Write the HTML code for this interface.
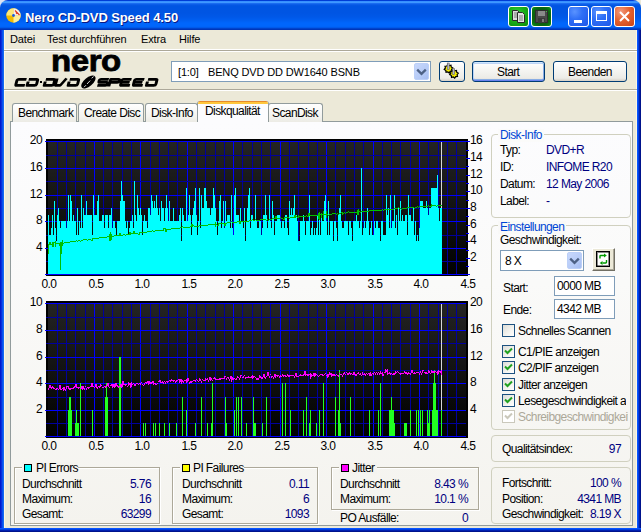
<!DOCTYPE html>
<html><head><meta charset="utf-8">
<style>
*{box-sizing:border-box}
html,body{margin:0;padding:0}
body{width:641px;height:532px;overflow:hidden;position:relative;background:#ECE9D8;font-family:"Liberation Sans",sans-serif;font-size:11px;color:#000}
.abs{position:absolute}
.t{position:absolute;white-space:nowrap;line-height:13px;font-size:12px;letter-spacing:-0.6px}
.m{font-size:11px;letter-spacing:-0.15px}
.nv{color:#000080}
.title{left:0;top:0;width:641px;height:30px;border-radius:8px 8px 0 0;
 background:linear-gradient(#003DD6 0px,#003DD6 1px,#2E87FF 1px,#3F98FF 2px,#3F98FF 3px,#2476F6 3px,#0F62EC 4px,#0758E4 5px,#0055E2 6px,#0055E3 13px,#0058E8 17px,#005EF0 20px,#0066FC 23px,#0066FC 26px,#0062F6 27px,#0052E0 28px,#0035B8 29px,#0035B8 30px)}
.lb{left:0;top:30px;width:4px;height:502px;background:linear-gradient(90deg,#0019CF 0,#0019CF 1px,#0831D9 1px,#0831D9 2px,#0850F0 2px,#0850F0 3px,#166AEE 3px)}
.rb{left:637px;top:30px;width:4px;height:502px;background:linear-gradient(90deg,#0855FF 0,#0855FF 1px,#0040E0 1px,#0040E0 2px,#0020B0 2px,#0020B0 3px,#00138C 3px)}
.bb{left:0;top:528px;width:641px;height:4px;background:linear-gradient(#0855FF 0,#0855FF 1px,#0040E0 1px,#0040E0 2px,#0020B0 2px,#0020B0 3px,#00138C 3px)}
.ttext{left:25px;top:7px;color:#fff;font-weight:bold;font-size:13px;line-height:21px;letter-spacing:-0.1px;text-shadow:1px 1px 0 #0A1883;white-space:nowrap}
.tbtn{top:6px;width:21px;height:21px;border:1px solid #fff;border-radius:3px}
.bl{background:radial-gradient(circle at 30% 25%,#5A93FF 0,#2F6FF6 40%,#1D56E8 100%)}
.gr{background:radial-gradient(circle at 40% 35%,#3CD23C 0,#1BB01B 45%,#0A8A0A 100%)}
.sep{left:4px;width:633px;height:1px}
.combo{background:#fff;border:1px solid #7F9DB9}
.ddb{border-radius:2px;background:linear-gradient(135deg,#C8D8FC 0,#B6CBF7 60%,#A6BDF2 100%);border:1px solid #BCD0F8}
.btn{border:1px solid #003C74;border-radius:3px;background:linear-gradient(#FFFFFF 0,#F6F6F3 40%,#ECEBE6 85%,#D6D0C5 100%)}
.tab{top:103px;height:19px;border:1px solid #919B9C;border-bottom:none;border-radius:3px 3px 0 0;background:linear-gradient(#FFFFFF,#F3F3EF 70%,#ECEBE5)}
.panel{left:10px;top:121px;width:623px;height:405px;border:1px solid #919B9C;background:linear-gradient(#FCFCFE 0,#FAFAF9 40%,#F4F3EE 100%)}
.gb{border:1px solid #D0D0BF;border-radius:4px}
.eb{border:1px solid #ACA899;box-shadow:1px 1px 0 #fff, inset 1px 1px 0 #fff}
.chk{width:13px;height:13px;border:1px solid #1C5180;background:linear-gradient(135deg,#DCDCD7 0,#F4F4F0 60%,#FFFFFF 100%)}
.chk.dis{border-color:#CAC8BB;background:#fff}
.sq{width:8px;height:8px;border:1px solid #000}
</style></head><body>
<!-- client background -->
<div class="abs" style="left:4px;top:30px;width:633px;height:498px;background:#ECE9D8"></div>
<div class="abs" style="left:4px;top:30px;width:1px;height:498px;background:#FCF6E2"></div>
<div class="abs" style="left:636px;top:30px;width:1px;height:498px;background:#FCF6E2"></div>
<!-- title bar -->
<div class="abs" style="left:0;top:0;width:8px;height:8px;background:#DCE2F2"></div>
<div class="abs title"></div>
<div class="abs lb"></div><div class="abs rb"></div><div class="abs bb"></div>
<!-- icon -->
<svg class="abs" style="left:6px;top:8px" width="15" height="15" viewBox="0 0 15 15">
 <circle cx="7.5" cy="7.5" r="7.2" fill="#F2BC00"/>
 <path d="M7.5 7.5 L0.3 7.5 A7.2 7.2 0 0 1 7.5 0.3 Z" fill="#FBE77A"/>
 <path d="M7.5 7.5 L14.7 7.5 A7.2 7.2 0 0 1 7.5 14.7 Z" fill="#FCEE9A"/>
 <path d="M7.5 7.5 L7.5 0.3 A7.2 7.2 0 0 1 14.7 7.5 Z" fill="#F4F0EE"/>
 <path d="M9 2.5 L13.5 7 M10 4.5 L11 6" stroke="#E03A1A" stroke-width="1.2"/>
 <circle cx="7.5" cy="7.5" r="1.4" fill="#1D5CE0"/>
</svg>
<div class="abs ttext">Nero CD-DVD Speed 4.50</div>
<!-- title buttons -->
<div class="abs tbtn gr" style="left:508px"></div>
<svg class="abs" style="left:512px;top:10px" width="14" height="14" viewBox="0 0 14 14">
 <path d="M0.5 0.5 H5.5 L7 2 V10.5 H0.5 Z" fill="#DCDCDC" stroke="#2A2A2A"/>
 <path d="M5.5 2.5 H10.5 L12.5 4.5 V12.5 H5.5 Z" fill="#E4E4E4" stroke="#2A2A2A"/>
 <path d="M2 3h3M2 5h3M2 7h3M7 6h4M7 8h4M7 10h4" stroke="#7A7A7A" stroke-width="1"/>
</svg>
<div class="abs tbtn gr" style="left:531px;background:radial-gradient(circle at 50% 50%,#0A3A0A 0,#0B6A10 70%,#10A015 100%)"></div>
<svg class="abs" style="left:535px;top:10px" width="13" height="13" viewBox="0 0 13 13">
 <rect x="0" y="0" width="13" height="13" fill="#2E2E2E"/>
 <rect x="1" y="1" width="11" height="11" fill="#4A4A4A"/>
 <rect x="3" y="1" width="7" height="5" fill="#8A8A8A"/>
 <rect x="3" y="8" width="7" height="5" fill="#3A3A3A"/>
 <rect x="7" y="9" width="2" height="3" fill="#7A7A7A"/>
 <rect x="11" y="1" width="1" height="1" fill="#40C040"/>
</svg>
<div class="abs tbtn bl" style="left:568px"></div>
<div class="abs" style="left:574px;top:20px;width:8px;height:3px;background:#fff"></div>
<div class="abs tbtn bl" style="left:591px"></div>
<div class="abs" style="left:596px;top:11px;width:11px;height:10px;border:1px solid #fff;border-top-width:3px"></div>
<div class="abs tbtn" style="left:614px;background:radial-gradient(circle at 30% 25%,#F39A7E 0,#E5622F 45%,#C94214 100%)"></div>
<svg class="abs" style="left:614px;top:6px" width="21" height="21" viewBox="0 0 21 21">
 <path d="M6 6 L15 15 M15 6 L6 15" stroke="#fff" stroke-width="2"/>
</svg>

<!-- menu -->
<div class="t m" style="left:10px;top:33px">Datei</div>
<div class="t m" style="left:47px;top:33px">Test durchführen</div>
<div class="t m" style="left:141px;top:33px">Extra</div>
<div class="t m" style="left:179px;top:33px">Hilfe</div>
<div class="abs sep" style="top:49px;background:#fff"></div>
<div class="abs sep" style="top:50px;background:#ACA899"></div>
<div class="abs sep" style="top:51px;background:#fff"></div>
<div class="abs sep" style="top:89px;background:#ACA899"></div>
<div class="abs sep" style="top:90px;background:#fff"></div>

<!-- logo -->
<div class="abs" style="left:51px;top:43px;font-weight:bold;font-size:30px;line-height:36px;letter-spacing:-0.4px;white-space:nowrap;-webkit-text-stroke:0.8px #000;transform-origin:0 0;transform:scaleX(1.1)">nero</div>
<svg class="abs" style="left:0;top:0" width="170" height="92"><g fill="none" stroke="#000" stroke-width="2.7" stroke-linejoin="round"><path transform="translate(16.4 78.4) skewX(-15) scale(1.1 1)" d="M9.4 1 H2.2 Q1 1 1 2.2 V5.8 Q1 7 2.2 7 H9.4"/><path transform="translate(27.9 78.4) skewX(-15) scale(1.1 1)" d="M1 1 H8 Q9.3 1 9.3 2.2 V5.8 Q9.3 7 8 7 H1 V3"/><path transform="translate(45.0 78.4) skewX(-15) scale(1.1 1)" d="M1 1 H8 Q9.3 1 9.3 2.2 V5.8 Q9.3 7 8 7 H1 V3"/><path transform="translate(56.0 78.4) skewX(-15) scale(1.1 1)" d="M1 0 V5.8 Q1 7 2.2 7 H5.6 L9.6 0"/><path transform="translate(68.9 78.4) skewX(-15) scale(1.1 1)" d="M1 1 H8 Q9.3 1 9.3 2.2 V5.8 Q9.3 7 8 7 H1 V3"/><path transform="translate(98.7 78.4) skewX(-15) scale(1.1 1)" d="M9.4 1 H2.2 Q1 1 1 2.2 V2.8 Q1 4 2.2 4 H8 Q9.3 4 9.3 5.2 V5.8 Q9.3 7 8 7 H0.5"/><path transform="translate(109.8 78.4) skewX(-15) scale(1.1 1)" d="M1 8 V1 H8 Q9.3 1 9.3 2.2 V2.8 Q9.3 4 8 4 H1.6"/><path transform="translate(121.2 78.4) skewX(-15) scale(1.1 1)" d="M9.6 1 H2.2 Q1 1 1 2.2 V5.8 Q1 7 2.2 7 H9.6 M1.5 4 H8.6"/><path transform="translate(134.0 78.4) skewX(-15) scale(1.1 1)" d="M9.6 1 H2.2 Q1 1 1 2.2 V5.8 Q1 7 2.2 7 H9.6 M1.5 4 H8.6"/><path transform="translate(147.2 78.4) skewX(-15) scale(1.1 1)" d="M1 1 H8 Q9.3 1 9.3 2.2 V5.8 Q9.3 7 8 7 H1 V3"/></g><rect x="40" y="81" width="2" height="2" fill="#000"/></svg>
<svg class="abs" style="left:80px;top:75px" width="17" height="14" viewBox="0 0 17 14">
 <ellipse cx="8.4" cy="7" rx="8.6" ry="4.3" transform="rotate(-40 8.4 7)" fill="#000"/>
 <path d="M4 12.2 L6 10.2 M7 9 L10.2 5.6 M11.6 3.2 L13.6 1.6" stroke="#fff" stroke-width="1" opacity="0.85"/>
</svg>


<!-- drive combo -->
<div class="abs combo" style="left:171px;top:61px;width:260px;height:21px"></div>
<div class="t m" style="left:178px;top:66px">[1:0]</div>
<div class="t m" style="left:208px;top:66px">BENQ DVD DD DW1640 BSNB</div>
<div class="abs ddb" style="left:414px;top:63px;width:15px;height:17px"></div>
<svg class="abs" style="left:414px;top:63px" width="15" height="17"><path d="M3.2 6.6 L7.5 10.8 L11.8 6.6" fill="none" stroke="#4D6185" stroke-width="2.3"/></svg>
<!-- buttons -->
<div class="abs btn" style="left:439px;top:61px;width:26px;height:21px"></div>
<svg class="abs" style="left:439px;top:61px" width="26" height="21" viewBox="0 0 26 21">
 <g stroke="#000" stroke-width="1.2" fill="#F5EE00">
 <path d="M9 3.2 L10.2 4.6 L12 4.2 L12.2 6 L13.8 7 L12.6 8.4 L13 10.2 L11.2 10.4 L10.2 12 L8.8 10.8 L7 11.2 L6.8 9.4 L5.2 8.4 L6.4 7 L6 5.2 L7.8 5 Z"/>
 <path d="M14.5 8.4 L15.7 9.8 L17.5 9.4 L17.7 11.2 L19.3 12.2 L18.1 13.6 L18.5 15.4 L16.7 15.6 L15.7 17.2 L14.3 16 L12.5 16.4 L12.3 14.6 L10.7 13.6 L11.9 12.2 L11.5 10.4 L13.3 10.2 Z"/>
 </g>
 <rect x="8.2" y="2" width="2" height="6.5" fill="#B8B8C8" stroke="#555" stroke-width="0.5"/>
 <rect x="13.7" y="7.5" width="2" height="6" fill="#B8B8C8" stroke="#555" stroke-width="0.5"/>
</svg>
<div class="abs btn" style="left:472px;top:61px;width:73px;height:21px;box-shadow:inset 0 1px 0 #CEE7FF,inset 0 -1px 0 #6982EE,inset 1px 0 0 #BCD4F6,inset -1px 0 0 #89ADE4,inset 0 2px 0 #BCD4F6,inset 0 -2px 0 #89ADE4"></div>
<div class="t" style="left:497px;top:66px">Start</div>
<div class="abs btn" style="left:553px;top:61px;width:74px;height:21px"></div>
<div class="t" style="left:568px;top:66px">Beenden</div>

<!-- tabs -->
<div class="abs panel"></div>
<div class="abs tab" style="left:12px;width:65px"></div>
<div class="t" style="left:18px;top:107px">Benchmark</div>
<div class="abs tab" style="left:78px;width:66px"></div>
<div class="t" style="left:84px;top:107px">Create Disc</div>
<div class="abs tab" style="left:145px;width:53px"></div>
<div class="t" style="left:151px;top:107px">Disk-Info</div>
<div class="abs tab" style="left:268px;width:55px"></div>
<div class="t" style="left:272px;top:107px">ScanDisk</div>
<div class="abs" style="left:197px;top:101px;width:72px;height:21px;background:#FCFCFE;border-left:1px solid #919B9C;border-right:1px solid #919B9C;border-radius:3px 3px 0 0;overflow:hidden">
 <div style="position:absolute;left:-1px;top:0;width:72px;height:1px;background:#E68B2C"></div>
 <div style="position:absolute;left:-1px;top:1px;width:72px;height:2px;background:#FFC73C"></div>
</div>
<div class="t" style="left:205px;top:105px">Diskqualität</div>

<svg class="abs" style="left:0;top:0" width="641" height="532" shape-rendering="crispEdges">
<defs><linearGradient id="bg" x1="0" y1="0" x2="0" y2="1"><stop offset="0" stop-color="#242424"/><stop offset="1" stop-color="#000"/></linearGradient></defs>
<rect x="46" y="139" width="422" height="137" fill="#000"/>
<rect x="48" y="141" width="418" height="134" fill="url(#bg)"/>
<rect x="57" y="141" width="1" height="134" fill="#00009c"/>
<rect x="66" y="141" width="1" height="134" fill="#00009c"/>
<rect x="75" y="141" width="1" height="134" fill="#00009c"/>
<rect x="85" y="141" width="1" height="134" fill="#00009c"/>
<rect x="94" y="141" width="1" height="134" fill="#0000ff"/>
<rect x="103" y="141" width="1" height="134" fill="#00009c"/>
<rect x="112" y="141" width="1" height="134" fill="#00009c"/>
<rect x="122" y="141" width="1" height="134" fill="#00009c"/>
<rect x="131" y="141" width="1" height="134" fill="#00009c"/>
<rect x="140" y="141" width="1" height="134" fill="#0000ff"/>
<rect x="150" y="141" width="1" height="134" fill="#00009c"/>
<rect x="159" y="141" width="1" height="134" fill="#00009c"/>
<rect x="168" y="141" width="1" height="134" fill="#00009c"/>
<rect x="177" y="141" width="1" height="134" fill="#00009c"/>
<rect x="187" y="141" width="1" height="134" fill="#0000ff"/>
<rect x="196" y="141" width="1" height="134" fill="#00009c"/>
<rect x="205" y="141" width="1" height="134" fill="#00009c"/>
<rect x="215" y="141" width="1" height="134" fill="#00009c"/>
<rect x="224" y="141" width="1" height="134" fill="#00009c"/>
<rect x="233" y="141" width="1" height="134" fill="#0000ff"/>
<rect x="242" y="141" width="1" height="134" fill="#00009c"/>
<rect x="252" y="141" width="1" height="134" fill="#00009c"/>
<rect x="261" y="141" width="1" height="134" fill="#00009c"/>
<rect x="270" y="141" width="1" height="134" fill="#00009c"/>
<rect x="280" y="141" width="1" height="134" fill="#0000ff"/>
<rect x="289" y="141" width="1" height="134" fill="#00009c"/>
<rect x="298" y="141" width="1" height="134" fill="#00009c"/>
<rect x="308" y="141" width="1" height="134" fill="#00009c"/>
<rect x="317" y="141" width="1" height="134" fill="#00009c"/>
<rect x="326" y="141" width="1" height="134" fill="#0000ff"/>
<rect x="335" y="141" width="1" height="134" fill="#00009c"/>
<rect x="345" y="141" width="1" height="134" fill="#00009c"/>
<rect x="354" y="141" width="1" height="134" fill="#00009c"/>
<rect x="363" y="141" width="1" height="134" fill="#00009c"/>
<rect x="373" y="141" width="1" height="134" fill="#0000ff"/>
<rect x="382" y="141" width="1" height="134" fill="#00009c"/>
<rect x="391" y="141" width="1" height="134" fill="#00009c"/>
<rect x="400" y="141" width="1" height="134" fill="#00009c"/>
<rect x="410" y="141" width="1" height="134" fill="#00009c"/>
<rect x="419" y="141" width="1" height="134" fill="#0000ff"/>
<rect x="428" y="141" width="1" height="134" fill="#00009c"/>
<rect x="438" y="141" width="1" height="134" fill="#00009c"/>
<rect x="447" y="141" width="1" height="134" fill="#00009c"/>
<rect x="456" y="141" width="1" height="134" fill="#00009c"/>
<rect x="45" y="274" width="421" height="1" fill="#0000ff"/>
<rect x="46" y="261" width="420" height="1" fill="#00009c"/>
<rect x="45" y="248" width="421" height="1" fill="#0000ff"/>
<rect x="46" y="235" width="420" height="1" fill="#00009c"/>
<rect x="45" y="221" width="421" height="1" fill="#0000ff"/>
<rect x="46" y="208" width="420" height="1" fill="#00009c"/>
<rect x="45" y="195" width="421" height="1" fill="#0000ff"/>
<rect x="46" y="181" width="420" height="1" fill="#00009c"/>
<rect x="45" y="168" width="421" height="1" fill="#0000ff"/>
<rect x="46" y="155" width="420" height="1" fill="#00009c"/>
<rect x="45" y="141" width="421" height="1" fill="#0000ff"/>
<rect x="441" y="141" width="1" height="133" fill="#d8d8d8"/>
<path d="M48 215V274h1V215zM49 235V274h1V235zM50 235V274h1V235zM51 228V274h1V228zM52 215V274h1V215zM53 235V274h1V235zM54 201V274h1V201zM55 228V274h1V228zM56 241V274h1V241zM57 215V274h1V215zM58 208V274h1V208zM59 221V274h1V221zM60 228V274h1V228zM61 221V274h1V221zM62 221V274h1V221zM63 221V274h1V221zM64 221V274h1V221zM65 221V274h1V221zM66 228V274h1V228zM67 221V274h1V221zM68 195V274h1V195zM69 221V274h1V221zM70 195V274h1V195zM71 201V274h1V201zM72 221V274h1V221zM73 215V274h1V215zM74 221V274h1V221zM75 221V274h1V221zM76 235V274h1V235zM77 208V274h1V208zM78 235V274h1V235zM79 221V274h1V221zM80 228V274h1V228zM81 195V274h1V195zM82 228V274h1V228zM83 208V274h1V208zM84 215V274h1V215zM85 215V274h1V215zM86 201V274h1V201zM87 215V274h1V215zM88 215V274h1V215zM89 215V274h1V215zM90 215V274h1V215zM91 215V274h1V215zM92 235V274h1V235zM93 195V274h1V195zM94 215V274h1V215zM95 215V274h1V215zM96 215V274h1V215zM97 201V274h1V201zM98 195V274h1V195zM99 221V274h1V221zM100 221V274h1V221zM101 221V274h1V221zM102 215V274h1V215zM103 215V274h1V215zM104 228V274h1V228zM105 215V274h1V215zM106 215V274h1V215zM107 215V274h1V215zM108 228V274h1V228zM109 215V274h1V215zM110 215V274h1V215zM111 208V274h1V208zM112 228V274h1V228zM113 221V274h1V221zM114 221V274h1V221zM115 228V274h1V228zM116 235V274h1V235zM117 221V274h1V221zM118 221V274h1V221zM119 221V274h1V221zM120 201V274h1V201zM121 181V274h1V181zM122 195V274h1V195zM123 201V274h1V201zM124 201V274h1V201zM125 221V274h1V221zM126 228V274h1V228zM127 221V274h1V221zM128 235V274h1V235zM129 228V274h1V228zM130 221V274h1V221zM131 221V274h1V221zM132 215V274h1V215zM133 228V274h1V228zM134 181V274h1V181zM135 215V274h1V215zM136 221V274h1V221zM137 195V274h1V195zM138 208V274h1V208zM139 215V274h1V215zM140 208V274h1V208zM141 215V274h1V215zM142 235V274h1V235zM143 221V274h1V221zM144 215V274h1V215zM145 221V274h1V221zM146 221V274h1V221zM147 228V274h1V228zM148 208V274h1V208zM149 208V274h1V208zM150 215V274h1V215zM151 195V274h1V195zM152 201V274h1V201zM153 208V274h1V208zM154 201V274h1V201zM155 208V274h1V208zM156 195V274h1V195zM157 208V274h1V208zM158 215V274h1V215zM159 208V274h1V208zM160 221V274h1V221zM161 201V274h1V201zM162 208V274h1V208zM163 208V274h1V208zM164 221V274h1V221zM165 208V274h1V208zM166 195V274h1V195zM167 208V274h1V208zM168 221V274h1V221zM169 201V274h1V201zM170 221V274h1V221zM171 221V274h1V221zM172 221V274h1V221zM173 208V274h1V208zM174 221V274h1V221zM175 221V274h1V221zM176 221V274h1V221zM177 221V274h1V221zM178 221V274h1V221zM179 215V274h1V215zM180 208V274h1V208zM181 241V274h1V241zM182 208V274h1V208zM183 215V274h1V215zM184 221V274h1V221zM185 221V274h1V221zM186 188V274h1V188zM187 221V274h1V221zM188 215V274h1V215zM189 195V274h1V195zM190 215V274h1V215zM191 235V274h1V235zM192 215V274h1V215zM193 208V274h1V208zM194 201V274h1V201zM195 188V274h1V188zM196 215V274h1V215zM197 235V274h1V235zM198 221V274h1V221zM199 188V274h1V188zM200 228V274h1V228zM201 195V274h1V195zM202 208V274h1V208zM203 208V274h1V208zM204 188V274h1V188zM205 188V274h1V188zM206 201V274h1V201zM207 208V274h1V208zM208 208V274h1V208zM209 208V274h1V208zM210 215V274h1V215zM211 208V274h1V208zM212 208V274h1V208zM213 188V274h1V188zM214 195V274h1V195zM215 208V274h1V208zM216 221V274h1V221zM217 235V274h1V235zM218 221V274h1V221zM219 201V274h1V201zM220 195V274h1V195zM221 228V274h1V228zM222 221V274h1V221zM223 201V274h1V201zM224 228V274h1V228zM225 201V274h1V201zM226 221V274h1V221zM227 215V274h1V215zM228 215V274h1V215zM229 215V274h1V215zM230 228V274h1V228zM231 195V274h1V195zM232 228V274h1V228zM233 235V274h1V235zM234 195V274h1V195zM235 188V274h1V188zM236 215V274h1V215zM237 215V274h1V215zM238 215V274h1V215zM239 221V274h1V221zM240 208V274h1V208zM241 221V274h1V221zM242 221V274h1V221zM243 228V274h1V228zM244 208V274h1V208zM245 241V274h1V241zM246 221V274h1V221zM247 208V274h1V208zM248 195V274h1V195zM249 188V274h1V188zM250 228V274h1V228zM251 215V274h1V215zM252 215V274h1V215zM253 221V274h1V221zM254 221V274h1V221zM255 195V274h1V195zM256 221V274h1V221zM257 228V274h1V228zM258 228V274h1V228zM259 221V274h1V221zM260 221V274h1V221zM261 235V274h1V235zM262 228V274h1V228zM263 215V274h1V215zM264 215V274h1V215zM265 195V274h1V195zM266 215V274h1V215zM267 228V274h1V228zM268 221V274h1V221zM269 195V274h1V195zM270 221V274h1V221zM271 228V274h1V228zM272 201V274h1V201zM273 215V274h1V215zM274 235V274h1V235zM275 221V274h1V221zM276 221V274h1V221zM277 215V274h1V215zM278 215V274h1V215zM279 215V274h1V215zM280 221V274h1V221zM281 228V274h1V228zM282 221V274h1V221zM283 221V274h1V221zM284 228V274h1V228zM285 215V274h1V215zM286 215V274h1V215zM287 228V274h1V228zM288 235V274h1V235zM289 201V274h1V201zM290 215V274h1V215zM291 208V274h1V208zM292 215V274h1V215zM293 208V274h1V208zM294 195V274h1V195zM295 215V274h1V215zM296 215V274h1V215zM297 221V274h1V221zM298 241V274h1V241zM299 241V274h1V241zM300 221V274h1V221zM301 221V274h1V221zM302 221V274h1V221zM303 215V274h1V215zM304 221V274h1V221zM305 235V274h1V235zM306 221V274h1V221zM307 221V274h1V221zM308 221V274h1V221zM309 195V274h1V195zM310 235V274h1V235zM311 228V274h1V228zM312 221V274h1V221zM313 235V274h1V235zM314 228V274h1V228zM315 235V274h1V235zM316 228V274h1V228zM317 215V274h1V215zM318 235V274h1V235zM319 215V274h1V215zM320 235V274h1V235zM321 215V274h1V215zM322 221V274h1V221zM323 221V274h1V221zM324 201V274h1V201zM325 195V274h1V195zM326 221V274h1V221zM327 235V274h1V235zM328 201V274h1V201zM329 235V274h1V235zM330 221V274h1V221zM331 221V274h1V221zM332 221V274h1V221zM333 241V274h1V241zM334 221V274h1V221zM335 221V274h1V221zM336 228V274h1V228zM337 241V274h1V241zM338 215V274h1V215zM339 208V274h1V208zM340 195V274h1V195zM341 221V274h1V221zM342 228V274h1V228zM343 228V274h1V228zM344 221V274h1V221zM345 221V274h1V221zM346 221V274h1V221zM347 221V274h1V221zM348 235V274h1V235zM349 221V274h1V221zM350 221V274h1V221zM351 228V274h1V228zM352 241V274h1V241zM353 221V274h1V221zM354 221V274h1V221zM355 221V274h1V221zM356 215V274h1V215zM357 221V274h1V221zM358 221V274h1V221zM359 228V274h1V228zM360 221V274h1V221zM361 168V274h1V168zM362 235V274h1V235zM363 228V274h1V228zM364 221V274h1V221zM365 228V274h1V228zM366 221V274h1V221zM367 208V274h1V208zM368 221V274h1V221zM369 235V274h1V235zM370 228V274h1V228zM371 221V274h1V221zM372 235V274h1V235zM373 235V274h1V235zM374 221V274h1V221zM375 228V274h1V228zM376 221V274h1V221zM377 221V274h1V221zM378 228V274h1V228zM379 228V274h1V228zM380 241V274h1V241zM381 221V274h1V221zM382 221V274h1V221zM383 235V274h1V235zM384 235V274h1V235zM385 235V274h1V235zM386 195V274h1V195zM387 215V274h1V215zM388 208V274h1V208zM389 228V274h1V228zM390 195V274h1V195zM391 228V274h1V228zM392 221V274h1V221zM393 221V274h1V221zM394 195V274h1V195zM395 228V274h1V228zM396 215V274h1V215zM397 235V274h1V235zM398 208V274h1V208zM399 221V274h1V221zM400 201V274h1V201zM401 221V274h1V221zM402 215V274h1V215zM403 221V274h1V221zM404 221V274h1V221zM405 215V274h1V215zM406 215V274h1V215zM407 235V274h1V235zM408 195V274h1V195zM409 215V274h1V215zM410 215V274h1V215zM411 221V274h1V221zM412 221V274h1V221zM413 208V274h1V208zM414 235V274h1V235zM415 221V274h1V221zM416 241V274h1V241zM417 235V274h1V235zM418 241V274h1V241zM419 228V274h1V228zM420 201V274h1V201zM421 201V274h1V201zM422 201V274h1V201zM423 208V274h1V208zM424 208V274h1V208zM425 208V274h1V208zM426 201V274h1V201zM427 208V274h1V208zM428 215V274h1V215zM429 208V274h1V208zM430 208V274h1V208zM431 188V274h1V188zM432 188V274h1V188zM433 188V274h1V188zM434 188V274h1V188zM435 188V274h1V188zM436 188V274h1V188zM437 175V274h1V175zM438 208V274h1V208zM439 221V274h1V221zM440 208V274h1V208zM441 208V274h1V208z" fill="#00ffff"/>
<path d="M48 244h1v1h-1zM49 242h1v1h-1zM50 244h1v1h-1zM51 244h1v1h-1zM52 246h1v1h-1zM53 242h1v1h-1zM54 242h1v1h-1zM55 243h1v1h-1zM56 243h1v1h-1zM57 243h1v1h-1zM58 243h1v1h-1zM59 245h1v1h-1zM60 242h1v1h-1zM61 242h1v1h-1zM62 242h1v1h-1zM63 243h1v1h-1zM64 242h1v1h-1zM65 242h1v1h-1zM66 242h1v1h-1zM67 242h1v1h-1zM68 242h1v1h-1zM69 242h1v1h-1zM70 241h1v1h-1zM71 241h1v1h-1zM72 241h1v1h-1zM73 241h1v1h-1zM74 241h1v1h-1zM75 241h1v1h-1zM76 240h1v1h-1zM77 241h1v1h-1zM78 240h1v1h-1zM79 240h1v1h-1zM80 241h1v1h-1zM81 240h1v1h-1zM82 240h1v1h-1zM83 239h1v1h-1zM84 239h1v1h-1zM85 239h1v1h-1zM86 239h1v1h-1zM87 240h1v1h-1zM88 239h1v1h-1zM89 239h1v1h-1zM90 239h1v1h-1zM91 240h1v1h-1zM92 238h1v1h-1zM93 238h1v1h-1zM94 238h1v1h-1zM95 238h1v1h-1zM96 238h1v1h-1zM97 238h1v1h-1zM98 238h1v1h-1zM99 237h1v1h-1zM100 237h1v1h-1zM101 237h1v1h-1zM102 237h1v1h-1zM103 237h1v1h-1zM104 237h1v1h-1zM105 237h1v1h-1zM106 237h1v1h-1zM107 236h1v1h-1zM108 236h1v1h-1zM109 236h1v1h-1zM110 236h1v1h-1zM111 236h1v1h-1zM112 236h1v1h-1zM113 236h1v1h-1zM114 235h1v1h-1zM115 235h1v1h-1zM116 235h1v1h-1zM117 235h1v1h-1zM118 235h1v1h-1zM119 233h1v1h-1zM120 235h1v1h-1zM121 235h1v1h-1zM122 235h1v1h-1zM123 234h1v1h-1zM124 234h1v1h-1zM125 235h1v1h-1zM126 234h1v1h-1zM127 234h1v1h-1zM128 234h1v1h-1zM129 232h1v1h-1zM130 234h1v1h-1zM131 233h1v1h-1zM132 233h1v1h-1zM133 231h1v1h-1zM134 233h1v1h-1zM135 233h1v1h-1zM136 233h1v1h-1zM137 233h1v1h-1zM138 234h1v1h-1zM139 232h1v1h-1zM140 232h1v1h-1zM141 232h1v1h-1zM142 232h1v1h-1zM143 232h1v1h-1zM144 232h1v1h-1zM145 232h1v1h-1zM146 232h1v1h-1zM147 231h1v1h-1zM148 231h1v1h-1zM149 231h1v1h-1zM150 231h1v1h-1zM151 231h1v1h-1zM152 230h1v1h-1zM153 231h1v1h-1zM154 231h1v1h-1zM155 230h1v1h-1zM156 230h1v1h-1zM157 230h1v1h-1zM158 230h1v1h-1zM159 230h1v1h-1zM160 230h1v1h-1zM161 230h1v1h-1zM162 230h1v1h-1zM163 228h1v1h-1zM164 228h1v1h-1zM165 231h1v1h-1zM166 229h1v1h-1zM167 229h1v1h-1zM168 229h1v1h-1zM169 229h1v1h-1zM170 229h1v1h-1zM171 228h1v1h-1zM172 228h1v1h-1zM173 228h1v1h-1zM174 228h1v1h-1zM175 228h1v1h-1zM176 228h1v1h-1zM177 228h1v1h-1zM178 228h1v1h-1zM179 228h1v1h-1zM180 227h1v1h-1zM181 227h1v1h-1zM182 226h1v1h-1zM183 227h1v1h-1zM184 227h1v1h-1zM185 227h1v1h-1zM186 227h1v1h-1zM187 227h1v1h-1zM188 227h1v1h-1zM189 227h1v1h-1zM190 226h1v1h-1zM191 224h1v1h-1zM192 226h1v1h-1zM193 225h1v1h-1zM194 226h1v1h-1zM195 226h1v1h-1zM196 226h1v1h-1zM197 226h1v1h-1zM198 226h1v1h-1zM199 225h1v1h-1zM200 225h1v1h-1zM201 225h1v1h-1zM202 225h1v1h-1zM203 225h1v1h-1zM204 225h1v1h-1zM205 225h1v1h-1zM206 225h1v1h-1zM207 225h1v1h-1zM208 224h1v1h-1zM209 224h1v1h-1zM210 224h1v1h-1zM211 224h1v1h-1zM212 224h1v1h-1zM213 224h1v1h-1zM214 224h1v1h-1zM215 224h1v1h-1zM216 224h1v1h-1zM217 225h1v1h-1zM218 223h1v1h-1zM219 223h1v1h-1zM220 223h1v1h-1zM221 223h1v1h-1zM222 223h1v1h-1zM223 223h1v1h-1zM224 225h1v1h-1zM225 223h1v1h-1zM226 223h1v1h-1zM227 222h1v1h-1zM228 222h1v1h-1zM229 222h1v1h-1zM230 222h1v1h-1zM231 221h1v1h-1zM232 222h1v1h-1zM233 222h1v1h-1zM234 222h1v1h-1zM235 222h1v1h-1zM236 222h1v1h-1zM237 221h1v1h-1zM238 221h1v1h-1zM239 223h1v1h-1zM240 221h1v1h-1zM241 221h1v1h-1zM242 221h1v1h-1zM243 221h1v1h-1zM244 221h1v1h-1zM245 221h1v1h-1zM246 221h1v1h-1zM247 221h1v1h-1zM248 221h1v1h-1zM249 220h1v1h-1zM250 220h1v1h-1zM251 220h1v1h-1zM252 219h1v1h-1zM253 220h1v1h-1zM254 220h1v1h-1zM255 219h1v1h-1zM256 220h1v1h-1zM257 220h1v1h-1zM258 220h1v1h-1zM259 220h1v1h-1zM260 219h1v1h-1zM261 219h1v1h-1zM262 219h1v1h-1zM263 219h1v1h-1zM264 219h1v1h-1zM265 219h1v1h-1zM266 220h1v1h-1zM267 219h1v1h-1zM268 220h1v1h-1zM269 219h1v1h-1zM270 219h1v1h-1zM271 219h1v1h-1zM272 218h1v1h-1zM273 218h1v1h-1zM274 218h1v1h-1zM275 216h1v1h-1zM276 218h1v1h-1zM277 218h1v1h-1zM278 218h1v1h-1zM279 218h1v1h-1zM280 217h1v1h-1zM281 218h1v1h-1zM282 218h1v1h-1zM283 219h1v1h-1zM284 217h1v1h-1zM285 217h1v1h-1zM286 217h1v1h-1zM287 217h1v1h-1zM288 217h1v1h-1zM289 218h1v1h-1zM290 217h1v1h-1zM291 217h1v1h-1zM292 217h1v1h-1zM293 217h1v1h-1zM294 215h1v1h-1zM295 217h1v1h-1zM296 216h1v1h-1zM297 217h1v1h-1zM298 215h1v1h-1zM299 216h1v1h-1zM300 216h1v1h-1zM301 216h1v1h-1zM302 216h1v1h-1zM303 216h1v1h-1zM304 216h1v1h-1zM305 216h1v1h-1zM306 215h1v1h-1zM307 216h1v1h-1zM308 213h1v1h-1zM309 215h1v1h-1zM310 215h1v1h-1zM311 215h1v1h-1zM312 215h1v1h-1zM313 215h1v1h-1zM314 215h1v1h-1zM315 215h1v1h-1zM316 215h1v1h-1zM317 215h1v1h-1zM318 215h1v1h-1zM319 215h1v1h-1zM320 214h1v1h-1zM321 214h1v1h-1zM322 214h1v1h-1zM323 214h1v1h-1zM324 214h1v1h-1zM325 214h1v1h-1zM326 214h1v1h-1zM327 214h1v1h-1zM328 215h1v1h-1zM329 214h1v1h-1zM330 214h1v1h-1zM331 214h1v1h-1zM332 213h1v1h-1zM333 213h1v1h-1zM334 213h1v1h-1zM335 213h1v1h-1zM336 214h1v1h-1zM337 213h1v1h-1zM338 214h1v1h-1zM339 213h1v1h-1zM340 213h1v1h-1zM341 212h1v1h-1zM342 214h1v1h-1zM343 213h1v1h-1zM344 212h1v1h-1zM345 213h1v1h-1zM346 212h1v1h-1zM347 212h1v1h-1zM348 211h1v1h-1zM349 212h1v1h-1zM350 212h1v1h-1zM351 212h1v1h-1zM352 212h1v1h-1zM353 212h1v1h-1zM354 212h1v1h-1zM355 212h1v1h-1zM356 212h1v1h-1zM357 211h1v1h-1zM358 211h1v1h-1zM359 211h1v1h-1zM360 212h1v1h-1zM361 211h1v1h-1zM362 211h1v1h-1zM363 211h1v1h-1zM364 211h1v1h-1zM365 211h1v1h-1zM366 211h1v1h-1zM367 211h1v1h-1zM368 211h1v1h-1zM369 210h1v1h-1zM370 210h1v1h-1zM371 210h1v1h-1zM372 210h1v1h-1zM373 210h1v1h-1zM374 210h1v1h-1zM375 210h1v1h-1zM376 210h1v1h-1zM377 210h1v1h-1zM378 210h1v1h-1zM379 210h1v1h-1zM380 210h1v1h-1zM381 210h1v1h-1zM382 209h1v1h-1zM383 210h1v1h-1zM384 209h1v1h-1zM385 209h1v1h-1zM386 209h1v1h-1zM387 209h1v1h-1zM388 209h1v1h-1zM389 209h1v1h-1zM390 209h1v1h-1zM391 209h1v1h-1zM392 209h1v1h-1zM393 209h1v1h-1zM394 208h1v1h-1zM395 208h1v1h-1zM396 208h1v1h-1zM397 208h1v1h-1zM398 207h1v1h-1zM399 208h1v1h-1zM400 208h1v1h-1zM401 209h1v1h-1zM402 208h1v1h-1zM403 208h1v1h-1zM404 208h1v1h-1zM405 208h1v1h-1zM406 208h1v1h-1zM407 207h1v1h-1zM408 207h1v1h-1zM409 207h1v1h-1zM410 207h1v1h-1zM411 207h1v1h-1zM412 207h1v1h-1zM413 207h1v1h-1zM414 208h1v1h-1zM415 207h1v1h-1zM416 207h1v1h-1zM417 206h1v1h-1zM418 207h1v1h-1zM419 206h1v1h-1zM420 206h1v1h-1zM421 206h1v1h-1zM422 206h1v1h-1zM423 206h1v1h-1zM424 206h1v1h-1zM425 206h1v1h-1zM426 206h1v1h-1zM427 206h1v1h-1zM428 205h1v1h-1zM429 206h1v1h-1zM430 206h1v1h-1zM431 204h1v1h-1zM432 205h1v1h-1zM433 205h1v1h-1zM434 205h1v1h-1zM435 205h1v1h-1zM436 206h1v1h-1zM437 205h1v1h-1zM438 205h1v1h-1zM439 205h1v1h-1zM440 205h1v1h-1zM441 205h1v1h-1z" fill="#00c000"/>
<path d="M49 242h1v3h-1zM50 242h1v3h-1zM52 244h1v3h-1zM53 242h1v5h-1zM59 243h1v3h-1zM60 242h1v4h-1zM92 238h1v3h-1zM119 233h1v3h-1zM120 233h1v3h-1zM129 232h1v3h-1zM130 232h1v3h-1zM133 231h1v3h-1zM134 231h1v3h-1zM139 232h1v3h-1zM163 228h1v3h-1zM165 228h1v4h-1zM166 229h1v3h-1zM191 224h1v3h-1zM192 224h1v3h-1zM218 223h1v3h-1zM224 223h1v3h-1zM225 223h1v3h-1zM239 221h1v3h-1zM240 221h1v3h-1zM275 216h1v3h-1zM276 216h1v3h-1zM284 217h1v3h-1zM294 215h1v3h-1zM295 215h1v3h-1zM298 215h1v3h-1zM308 213h1v4h-1zM309 213h1v3h-1zM342 212h1v3h-1zM431 204h1v3h-1z" fill="#00c000"/>
<rect x="48" y="245" width="1" height="9" fill="#00c000"/>
<rect x="60" y="242" width="1" height="28" fill="#00c000"/>
<rect x="61" y="242" width="1" height="12" fill="#00c000"/>
<rect x="109" y="234" width="1" height="7" fill="#00c000"/>
<rect x="110" y="232" width="1" height="9" fill="#00c000"/>
<rect x="111" y="234" width="1" height="6" fill="#00c000"/>
<rect x="318" y="213" width="1" height="6" fill="#00c000"/>
<rect x="319" y="212" width="1" height="8" fill="#00c000"/>
<rect x="321" y="213" width="1" height="5" fill="#00c000"/>
<rect x="323" y="211" width="1" height="9" fill="#00c000"/>
<rect x="326" y="211" width="1" height="7" fill="#00c000"/>
<rect x="357" y="210" width="1" height="5" fill="#00c000"/>
<rect x="358" y="209" width="1" height="6" fill="#00c000"/>
<rect x="215" y="222" width="1" height="5" fill="#00c000"/>
<rect x="52" y="242" width="1" height="5" fill="#00c000"/>
<rect x="55" y="241" width="1" height="6" fill="#00c000"/>
<rect x="62" y="240" width="1" height="6" fill="#00c000"/>
<rect x="466" y="274" width="4" height="1" fill="#0000ff"/>
<rect x="466" y="266" width="3" height="1" fill="#0000ff"/>
<rect x="466" y="258" width="4" height="1" fill="#0000ff"/>
<rect x="466" y="250" width="3" height="1" fill="#0000ff"/>
<rect x="466" y="241" width="4" height="1" fill="#0000ff"/>
<rect x="466" y="233" width="3" height="1" fill="#0000ff"/>
<rect x="466" y="225" width="4" height="1" fill="#0000ff"/>
<rect x="466" y="216" width="3" height="1" fill="#0000ff"/>
<rect x="466" y="208" width="4" height="1" fill="#0000ff"/>
<rect x="466" y="200" width="3" height="1" fill="#0000ff"/>
<rect x="466" y="191" width="4" height="1" fill="#0000ff"/>
<rect x="466" y="183" width="3" height="1" fill="#0000ff"/>
<rect x="466" y="175" width="4" height="1" fill="#0000ff"/>
<rect x="466" y="166" width="3" height="1" fill="#0000ff"/>
<rect x="466" y="158" width="4" height="1" fill="#0000ff"/>
<rect x="466" y="150" width="3" height="1" fill="#0000ff"/>
<rect x="466" y="141" width="4" height="1" fill="#0000ff"/>
<rect x="48" y="139" width="420" height="2" fill="#000"/>
<rect x="46" y="275" width="422" height="1" fill="#000"/>
<rect x="466" y="139" width="2" height="136" fill="#000"/>
<rect x="46" y="140" width="2" height="136" fill="#000"/>
<rect x="45" y="274" width="3" height="1" fill="#0000ff"/>
<rect x="46" y="261" width="2" height="1" fill="#00009c"/>
<rect x="45" y="248" width="3" height="1" fill="#0000ff"/>
<rect x="46" y="235" width="2" height="1" fill="#00009c"/>
<rect x="45" y="221" width="3" height="1" fill="#0000ff"/>
<rect x="46" y="208" width="2" height="1" fill="#00009c"/>
<rect x="45" y="195" width="3" height="1" fill="#0000ff"/>
<rect x="46" y="181" width="2" height="1" fill="#00009c"/>
<rect x="45" y="168" width="3" height="1" fill="#0000ff"/>
<rect x="46" y="155" width="2" height="1" fill="#00009c"/>
<rect x="45" y="141" width="3" height="1" fill="#0000ff"/>
<rect x="48" y="141" width="422" height="1" fill="#0000ff"/>
<rect x="48" y="274" width="422" height="1" fill="#0000ff"/>
<rect x="466" y="274" width="4" height="1" fill="#0000ff"/>
<rect x="466" y="266" width="3" height="1" fill="#0000ff"/>
<rect x="466" y="258" width="4" height="1" fill="#0000ff"/>
<rect x="466" y="250" width="3" height="1" fill="#0000ff"/>
<rect x="466" y="241" width="4" height="1" fill="#0000ff"/>
<rect x="466" y="233" width="3" height="1" fill="#0000ff"/>
<rect x="466" y="225" width="4" height="1" fill="#0000ff"/>
<rect x="466" y="216" width="3" height="1" fill="#0000ff"/>
<rect x="466" y="208" width="4" height="1" fill="#0000ff"/>
<rect x="466" y="200" width="3" height="1" fill="#0000ff"/>
<rect x="466" y="191" width="4" height="1" fill="#0000ff"/>
<rect x="466" y="183" width="3" height="1" fill="#0000ff"/>
<rect x="466" y="175" width="4" height="1" fill="#0000ff"/>
<rect x="466" y="166" width="3" height="1" fill="#0000ff"/>
<rect x="466" y="158" width="4" height="1" fill="#0000ff"/>
<rect x="466" y="150" width="3" height="1" fill="#0000ff"/>
<rect x="466" y="141" width="4" height="1" fill="#0000ff"/>
<rect x="46" y="301" width="422" height="137" fill="#000"/>
<rect x="48" y="303" width="418" height="134" fill="url(#bg)"/>
<rect x="57" y="303" width="1" height="134" fill="#00009c"/>
<rect x="66" y="303" width="1" height="134" fill="#00009c"/>
<rect x="75" y="303" width="1" height="134" fill="#00009c"/>
<rect x="85" y="303" width="1" height="134" fill="#00009c"/>
<rect x="94" y="303" width="1" height="134" fill="#0000ff"/>
<rect x="103" y="303" width="1" height="134" fill="#00009c"/>
<rect x="112" y="303" width="1" height="134" fill="#00009c"/>
<rect x="122" y="303" width="1" height="134" fill="#00009c"/>
<rect x="131" y="303" width="1" height="134" fill="#00009c"/>
<rect x="140" y="303" width="1" height="134" fill="#0000ff"/>
<rect x="150" y="303" width="1" height="134" fill="#00009c"/>
<rect x="159" y="303" width="1" height="134" fill="#00009c"/>
<rect x="168" y="303" width="1" height="134" fill="#00009c"/>
<rect x="177" y="303" width="1" height="134" fill="#00009c"/>
<rect x="187" y="303" width="1" height="134" fill="#0000ff"/>
<rect x="196" y="303" width="1" height="134" fill="#00009c"/>
<rect x="205" y="303" width="1" height="134" fill="#00009c"/>
<rect x="215" y="303" width="1" height="134" fill="#00009c"/>
<rect x="224" y="303" width="1" height="134" fill="#00009c"/>
<rect x="233" y="303" width="1" height="134" fill="#0000ff"/>
<rect x="242" y="303" width="1" height="134" fill="#00009c"/>
<rect x="252" y="303" width="1" height="134" fill="#00009c"/>
<rect x="261" y="303" width="1" height="134" fill="#00009c"/>
<rect x="270" y="303" width="1" height="134" fill="#00009c"/>
<rect x="280" y="303" width="1" height="134" fill="#0000ff"/>
<rect x="289" y="303" width="1" height="134" fill="#00009c"/>
<rect x="298" y="303" width="1" height="134" fill="#00009c"/>
<rect x="308" y="303" width="1" height="134" fill="#00009c"/>
<rect x="317" y="303" width="1" height="134" fill="#00009c"/>
<rect x="326" y="303" width="1" height="134" fill="#0000ff"/>
<rect x="335" y="303" width="1" height="134" fill="#00009c"/>
<rect x="345" y="303" width="1" height="134" fill="#00009c"/>
<rect x="354" y="303" width="1" height="134" fill="#00009c"/>
<rect x="363" y="303" width="1" height="134" fill="#00009c"/>
<rect x="373" y="303" width="1" height="134" fill="#0000ff"/>
<rect x="382" y="303" width="1" height="134" fill="#00009c"/>
<rect x="391" y="303" width="1" height="134" fill="#00009c"/>
<rect x="400" y="303" width="1" height="134" fill="#00009c"/>
<rect x="410" y="303" width="1" height="134" fill="#00009c"/>
<rect x="419" y="303" width="1" height="134" fill="#0000ff"/>
<rect x="428" y="303" width="1" height="134" fill="#00009c"/>
<rect x="438" y="303" width="1" height="134" fill="#00009c"/>
<rect x="447" y="303" width="1" height="134" fill="#00009c"/>
<rect x="456" y="303" width="1" height="134" fill="#00009c"/>
<rect x="45" y="436" width="421" height="1" fill="#0000ff"/>
<rect x="46" y="423" width="420" height="1" fill="#00009c"/>
<rect x="45" y="410" width="421" height="1" fill="#0000ff"/>
<rect x="46" y="397" width="420" height="1" fill="#00009c"/>
<rect x="45" y="383" width="421" height="1" fill="#0000ff"/>
<rect x="46" y="370" width="420" height="1" fill="#00009c"/>
<rect x="45" y="357" width="421" height="1" fill="#0000ff"/>
<rect x="46" y="343" width="420" height="1" fill="#00009c"/>
<rect x="45" y="330" width="421" height="1" fill="#0000ff"/>
<rect x="46" y="317" width="420" height="1" fill="#00009c"/>
<rect x="45" y="303" width="421" height="1" fill="#0000ff"/>
<rect x="441" y="303" width="1" height="133" fill="#d8d8d8"/>
<path d="M68 410V437h1V410zM69 397V437h1V397zM70 397V437h1V397zM71 410V437h1V410zM75 423V437h1V423zM76 410V437h1V410zM77 423V437h1V423zM78 423V437h1V423zM80 383V437h1V383zM92 410V437h1V410zM105 397V437h1V397zM106 383V437h1V383zM107 397V437h1V397zM119 357V437h1V357zM120 357V437h1V357zM143 423V437h1V423zM145 423V437h1V423zM153 423V437h1V423zM155 423V437h1V423zM159 423V437h1V423zM164 423V437h1V423zM169 423V437h1V423zM176 423V437h1V423zM182 397V437h1V397zM186 410V437h1V410zM195 423V437h1V423zM201 397V437h1V397zM207 423V437h1V423zM211 423V437h1V423zM212 383V437h1V383zM225 397V437h1V397zM226 423V437h1V423zM234 410V437h1V410zM236 397V437h1V397zM238 397V437h1V397zM241 397V437h1V397zM246 423V437h1V423zM253 397V437h1V397zM254 423V437h1V423zM255 423V437h1V423zM262 423V437h1V423zM266 397V437h1V397zM282 383V437h1V383zM285 383V437h1V383zM290 410V437h1V410zM303 410V437h1V410zM306 397V437h1V397zM309 423V437h1V423zM310 410V437h1V410zM316 423V437h1V423zM319 410V437h1V410zM323 383V437h1V383zM335 397V437h1V397zM338 410V437h1V410zM339 370V437h1V370zM340 423V437h1V423zM350 397V437h1V397zM369 410V437h1V410zM378 410V437h1V410zM380 383V437h1V383zM389 410V437h1V410zM390 410V437h1V410zM391 397V437h1V397zM392 410V437h1V410zM393 410V437h1V410zM394 423V437h1V423zM404 423V437h1V423zM405 423V437h1V423zM406 423V437h1V423zM410 410V437h1V410zM416 410V437h1V410zM418 410V437h1V410zM420 410V437h1V410zM422 410V437h1V410zM427 410V437h1V410zM428 423V437h1V423zM429 410V437h1V410zM432 410V437h1V410zM433 383V437h1V383zM434 370V437h1V370zM435 383V437h1V383zM436 410V437h1V410zM437 410V437h1V410zM441 410V437h1V410z" fill="#22ff22"/>
<path d="M48 388h1v2h-1zM49 385h1v2h-1zM50 387h1v1h-1zM51 387h1v2h-1zM52 386h1v2h-1zM53 387h1v2h-1zM54 388h1v1h-1zM55 389h1v1h-1zM56 388h1v2h-1zM57 388h1v1h-1zM58 389h1v1h-1zM59 386h1v1h-1zM60 388h1v2h-1zM61 389h1v1h-1zM62 388h1v1h-1zM63 390h1v1h-1zM64 388h1v2h-1zM65 389h1v2h-1zM66 386h1v1h-1zM67 386h1v1h-1zM68 388h1v1h-1zM69 388h1v2h-1zM70 388h1v2h-1zM71 388h1v1h-1zM72 388h1v1h-1zM73 387h1v2h-1zM74 386h1v2h-1zM75 385h1v2h-1zM76 387h1v1h-1zM77 387h1v1h-1zM78 387h1v2h-1zM79 387h1v1h-1zM80 388h1v1h-1zM81 387h1v2h-1zM82 389h1v1h-1zM83 387h1v2h-1zM84 388h1v2h-1zM85 386h1v1h-1zM86 388h1v2h-1zM87 387h1v1h-1zM88 387h1v2h-1zM89 387h1v1h-1zM90 386h1v1h-1zM91 383h1v1h-1zM92 386h1v1h-1zM93 386h1v1h-1zM94 387h1v1h-1zM95 384h1v2h-1zM96 386h1v2h-1zM97 387h1v2h-1zM98 386h1v1h-1zM99 386h1v2h-1zM100 385h1v2h-1zM101 385h1v1h-1zM102 387h1v1h-1zM103 387h1v1h-1zM104 386h1v1h-1zM105 386h1v2h-1zM106 385h1v2h-1zM107 383h1v1h-1zM108 386h1v1h-1zM109 387h1v1h-1zM110 385h1v1h-1zM111 384h1v2h-1zM112 386h1v2h-1zM113 384h1v2h-1zM114 387h1v1h-1zM115 383h1v1h-1zM116 385h1v1h-1zM117 385h1v2h-1zM118 386h1v2h-1zM119 386h1v1h-1zM120 385h1v1h-1zM121 387h1v1h-1zM122 382h1v1h-1zM123 384h1v1h-1zM124 384h1v1h-1zM125 384h1v2h-1zM126 384h1v1h-1zM127 386h1v1h-1zM128 383h1v1h-1zM129 383h1v2h-1zM130 387h1v1h-1zM131 382h1v1h-1zM132 384h1v1h-1zM133 383h1v1h-1zM134 384h1v2h-1zM135 384h1v2h-1zM136 383h1v1h-1zM137 383h1v1h-1zM138 384h1v1h-1zM139 383h1v1h-1zM140 383h1v2h-1zM141 382h1v1h-1zM142 384h1v1h-1zM143 385h1v1h-1zM144 383h1v2h-1zM145 382h1v1h-1zM146 382h1v2h-1zM147 381h1v2h-1zM148 383h1v2h-1zM149 381h1v2h-1zM150 382h1v2h-1zM151 382h1v2h-1zM152 381h1v2h-1zM153 383h1v2h-1zM154 383h1v1h-1zM155 383h1v2h-1zM156 384h1v1h-1zM157 383h1v1h-1zM158 381h1v1h-1zM159 380h1v2h-1zM160 382h1v1h-1zM161 382h1v1h-1zM162 381h1v2h-1zM163 382h1v2h-1zM164 381h1v1h-1zM165 382h1v2h-1zM166 381h1v1h-1zM167 381h1v2h-1zM168 381h1v1h-1zM169 380h1v1h-1zM170 380h1v2h-1zM171 379h1v2h-1zM172 380h1v1h-1zM173 380h1v2h-1zM174 380h1v1h-1zM175 381h1v2h-1zM176 380h1v2h-1zM177 380h1v1h-1zM178 379h1v1h-1zM179 381h1v2h-1zM180 380h1v2h-1zM181 382h1v2h-1zM182 380h1v2h-1zM183 381h1v2h-1zM184 380h1v1h-1zM185 380h1v1h-1zM186 382h1v1h-1zM187 378h1v2h-1zM188 380h1v1h-1zM189 382h1v2h-1zM190 381h1v2h-1zM191 381h1v2h-1zM192 381h1v1h-1zM193 380h1v1h-1zM194 380h1v1h-1zM195 380h1v2h-1zM196 379h1v1h-1zM197 380h1v1h-1zM198 381h1v1h-1zM199 378h1v2h-1zM200 379h1v2h-1zM201 381h1v2h-1zM202 379h1v1h-1zM203 380h1v1h-1zM204 380h1v1h-1zM205 378h1v1h-1zM206 379h1v1h-1zM207 378h1v2h-1zM208 380h1v2h-1zM209 378h1v2h-1zM210 379h1v2h-1zM211 378h1v2h-1zM212 380h1v1h-1zM213 378h1v1h-1zM214 377h1v2h-1zM215 378h1v2h-1zM216 379h1v1h-1zM217 379h1v1h-1zM218 379h1v1h-1zM219 378h1v2h-1zM220 378h1v2h-1zM221 378h1v1h-1zM222 378h1v1h-1zM223 378h1v1h-1zM224 376h1v2h-1zM225 376h1v1h-1zM226 378h1v2h-1zM227 377h1v1h-1zM228 377h1v2h-1zM229 379h1v2h-1zM230 377h1v2h-1zM231 380h1v2h-1zM232 378h1v1h-1zM233 378h1v2h-1zM234 378h1v1h-1zM235 379h1v1h-1zM236 378h1v2h-1zM237 376h1v2h-1zM238 377h1v1h-1zM239 378h1v2h-1zM240 376h1v1h-1zM241 375h1v1h-1zM242 377h1v1h-1zM243 376h1v2h-1zM244 375h1v1h-1zM245 377h1v2h-1zM246 377h1v1h-1zM247 377h1v1h-1zM248 376h1v2h-1zM249 377h1v1h-1zM250 377h1v1h-1zM251 376h1v2h-1zM252 378h1v1h-1zM253 376h1v2h-1zM254 376h1v1h-1zM255 377h1v1h-1zM256 378h1v2h-1zM257 378h1v2h-1zM258 378h1v2h-1zM259 376h1v1h-1zM260 376h1v2h-1zM261 377h1v2h-1zM262 377h1v2h-1zM263 374h1v1h-1zM264 376h1v2h-1zM265 377h1v2h-1zM266 376h1v1h-1zM267 372h1v2h-1zM268 375h1v1h-1zM269 376h1v2h-1zM270 374h1v1h-1zM271 376h1v2h-1zM272 376h1v1h-1zM273 377h1v2h-1zM274 375h1v2h-1zM275 377h1v1h-1zM276 375h1v1h-1zM277 375h1v2h-1zM278 375h1v1h-1zM279 376h1v2h-1zM280 375h1v2h-1zM281 376h1v1h-1zM282 374h1v2h-1zM283 375h1v2h-1zM284 375h1v1h-1zM285 375h1v2h-1zM286 376h1v1h-1zM287 374h1v2h-1zM288 375h1v2h-1zM289 375h1v2h-1zM290 375h1v1h-1zM291 375h1v1h-1zM292 375h1v1h-1zM293 375h1v1h-1zM294 376h1v2h-1zM295 374h1v2h-1zM296 376h1v1h-1zM297 376h1v1h-1zM298 376h1v1h-1zM299 375h1v1h-1zM300 374h1v2h-1zM301 375h1v1h-1zM302 375h1v1h-1zM303 374h1v2h-1zM304 372h1v2h-1zM305 374h1v2h-1zM306 374h1v1h-1zM307 374h1v2h-1zM308 374h1v2h-1zM309 374h1v1h-1zM310 377h1v2h-1zM311 374h1v2h-1zM312 375h1v1h-1zM313 374h1v1h-1zM314 375h1v2h-1zM315 373h1v2h-1zM316 374h1v1h-1zM317 375h1v1h-1zM318 376h1v1h-1zM319 375h1v1h-1zM320 374h1v1h-1zM321 374h1v1h-1zM322 374h1v2h-1zM323 375h1v1h-1zM324 374h1v1h-1zM325 373h1v1h-1zM326 375h1v1h-1zM327 376h1v2h-1zM328 374h1v1h-1zM329 373h1v1h-1zM330 373h1v2h-1zM331 376h1v1h-1zM332 374h1v2h-1zM333 374h1v2h-1zM334 374h1v2h-1zM335 375h1v1h-1zM336 374h1v1h-1zM337 375h1v1h-1zM338 375h1v2h-1zM339 373h1v1h-1zM340 374h1v1h-1zM341 374h1v1h-1zM342 375h1v2h-1zM343 373h1v2h-1zM344 372h1v2h-1zM345 374h1v1h-1zM346 372h1v1h-1zM347 373h1v2h-1zM348 373h1v2h-1zM349 372h1v2h-1zM350 373h1v2h-1zM351 373h1v1h-1zM352 374h1v1h-1zM353 372h1v2h-1zM354 374h1v1h-1zM355 374h1v2h-1zM356 374h1v2h-1zM357 373h1v1h-1zM358 372h1v2h-1zM359 374h1v1h-1zM360 373h1v2h-1zM361 375h1v1h-1zM362 373h1v1h-1zM363 374h1v1h-1zM364 373h1v2h-1zM365 374h1v2h-1zM366 373h1v1h-1zM367 374h1v1h-1zM368 373h1v1h-1zM369 375h1v1h-1zM370 373h1v1h-1zM371 374h1v2h-1zM372 373h1v1h-1zM373 373h1v2h-1zM374 372h1v1h-1zM375 373h1v2h-1zM376 372h1v1h-1zM377 373h1v2h-1zM378 372h1v1h-1zM379 373h1v2h-1zM380 371h1v2h-1zM381 373h1v1h-1zM382 375h1v1h-1zM383 374h1v2h-1zM384 372h1v1h-1zM385 370h1v1h-1zM386 370h1v2h-1zM387 373h1v2h-1zM388 373h1v1h-1zM389 372h1v2h-1zM390 373h1v2h-1zM391 373h1v1h-1zM392 374h1v1h-1zM393 373h1v2h-1zM394 373h1v2h-1zM395 372h1v2h-1zM396 372h1v1h-1zM397 371h1v1h-1zM398 372h1v1h-1zM399 373h1v1h-1zM400 373h1v2h-1zM401 373h1v1h-1zM402 373h1v1h-1zM403 373h1v1h-1zM404 371h1v2h-1zM405 372h1v2h-1zM406 372h1v2h-1zM407 373h1v2h-1zM408 372h1v2h-1zM409 373h1v1h-1zM410 373h1v2h-1zM411 370h1v1h-1zM412 372h1v1h-1zM413 373h1v1h-1zM414 372h1v2h-1zM415 373h1v1h-1zM416 372h1v1h-1zM417 372h1v1h-1zM418 372h1v1h-1zM419 373h1v2h-1zM420 371h1v2h-1zM421 373h1v2h-1zM422 370h1v1h-1zM423 370h1v1h-1zM424 372h1v1h-1zM425 372h1v2h-1zM426 372h1v2h-1zM427 373h1v1h-1zM428 370h1v1h-1zM429 371h1v2h-1zM430 373h1v1h-1zM431 370h1v2h-1zM432 371h1v2h-1zM433 371h1v2h-1zM434 371h1v2h-1zM435 371h1v1h-1zM436 372h1v1h-1zM437 373h1v2h-1zM438 370h1v2h-1zM439 371h1v1h-1zM440 371h1v2h-1zM441 373h1v2h-1z" fill="#ff00ff"/>
<path d="M49 385h1v3h-1zM50 385h1v3h-1zM59 385h1v4h-1zM60 385h1v4h-1zM63 387h1v3h-1zM64 387h1v3h-1zM66 386h1v3h-1zM68 386h1v3h-1zM75 384h1v3h-1zM76 384h1v3h-1zM81 386h1v3h-1zM82 386h1v3h-1zM83 386h1v3h-1zM91 383h1v4h-1zM92 383h1v4h-1zM95 384h1v3h-1zM96 384h1v3h-1zM100 384h1v3h-1zM107 383h1v3h-1zM108 383h1v4h-1zM112 384h1v3h-1zM113 384h1v3h-1zM114 384h1v3h-1zM115 383h1v4h-1zM116 383h1v3h-1zM120 384h1v3h-1zM121 384h1v3h-1zM122 381h1v6h-1zM123 381h1v3h-1zM128 382h1v4h-1zM130 383h1v4h-1zM131 382h1v5h-1zM148 381h1v3h-1zM149 381h1v3h-1zM153 381h1v3h-1zM160 380h1v3h-1zM179 379h1v3h-1zM180 379h1v3h-1zM181 379h1v3h-1zM186 379h1v3h-1zM187 378h1v4h-1zM188 378h1v3h-1zM199 378h1v3h-1zM205 378h1v3h-1zM209 377h1v3h-1zM210 377h1v3h-1zM224 376h1v3h-1zM230 376h1v3h-1zM231 376h1v4h-1zM232 377h1v3h-1zM240 375h1v3h-1zM252 375h1v3h-1zM259 375h1v3h-1zM263 374h1v3h-1zM264 374h1v3h-1zM267 372h1v4h-1zM268 372h1v3h-1zM274 374h1v3h-1zM275 374h1v3h-1zM295 373h1v3h-1zM296 373h1v4h-1zM304 371h1v4h-1zM305 371h1v4h-1zM310 373h1v4h-1zM311 374h1v3h-1zM313 373h1v3h-1zM314 373h1v3h-1zM315 373h1v3h-1zM327 374h1v3h-1zM328 374h1v3h-1zM329 372h1v3h-1zM331 373h1v3h-1zM353 372h1v3h-1zM354 372h1v3h-1zM362 372h1v3h-1zM369 373h1v3h-1zM370 372h1v4h-1zM380 371h1v3h-1zM382 372h1v3h-1zM385 369h1v4h-1zM387 369h1v4h-1zM395 371h1v3h-1zM411 370h1v3h-1zM412 370h1v3h-1zM422 370h1v3h-1zM428 370h1v3h-1zM431 370h1v3h-1zM437 371h1v3h-1zM438 370h1v4h-1zM441 370h1v3h-1z" fill="#ff00ff"/>
<rect x="48" y="301" width="420" height="2" fill="#000"/>
<rect x="46" y="437" width="422" height="1" fill="#000"/>
<rect x="466" y="301" width="2" height="137" fill="#000"/>
<rect x="46" y="302" width="2" height="136" fill="#000"/>
<rect x="45" y="436" width="3" height="1" fill="#0000ff"/>
<rect x="46" y="423" width="2" height="1" fill="#00009c"/>
<rect x="45" y="410" width="3" height="1" fill="#0000ff"/>
<rect x="46" y="397" width="2" height="1" fill="#00009c"/>
<rect x="45" y="383" width="3" height="1" fill="#0000ff"/>
<rect x="46" y="370" width="2" height="1" fill="#00009c"/>
<rect x="45" y="357" width="3" height="1" fill="#0000ff"/>
<rect x="46" y="343" width="2" height="1" fill="#00009c"/>
<rect x="45" y="330" width="3" height="1" fill="#0000ff"/>
<rect x="46" y="317" width="2" height="1" fill="#00009c"/>
<rect x="45" y="303" width="3" height="1" fill="#0000ff"/>
<rect x="48" y="303" width="418" height="1" fill="#0000ff"/>
<rect x="48" y="436" width="418" height="1" fill="#0000ff"/>
</svg>
<div class="t " style="right:599px;top:134px;">20</div>
<div class="t " style="right:599px;top:161px;">16</div>
<div class="t " style="right:599px;top:188px;">12</div>
<div class="t " style="right:599px;top:214px;">8</div>
<div class="t " style="right:599px;top:241px;">4</div>
<div class="t " style="left:470px;top:251px;">2</div>
<div class="t " style="left:470px;top:234px;">4</div>
<div class="t " style="left:470px;top:218px;">6</div>
<div class="t " style="left:470px;top:201px;">8</div>
<div class="t " style="left:470px;top:184px;">10</div>
<div class="t " style="left:470px;top:168px;">12</div>
<div class="t " style="left:470px;top:151px;">14</div>
<div class="t " style="left:470px;top:134px;">16</div>
<div class="t " style="left:19px;width:60px;text-align:center;top:278px;">0.0</div>
<div class="t " style="left:66px;width:60px;text-align:center;top:278px;">0.5</div>
<div class="t " style="left:112px;width:60px;text-align:center;top:278px;">1.0</div>
<div class="t " style="left:159px;width:60px;text-align:center;top:278px;">1.5</div>
<div class="t " style="left:205px;width:60px;text-align:center;top:278px;">2.0</div>
<div class="t " style="left:252px;width:60px;text-align:center;top:278px;">2.5</div>
<div class="t " style="left:298px;width:60px;text-align:center;top:278px;">3.0</div>
<div class="t " style="left:345px;width:60px;text-align:center;top:278px;">3.5</div>
<div class="t " style="left:391px;width:60px;text-align:center;top:278px;">4.0</div>
<div class="t " style="left:438px;width:60px;text-align:center;top:278px;">4.5</div>
<div class="t " style="right:599px;top:296px;">10</div>
<div class="t " style="right:599px;top:323px;">8</div>
<div class="t " style="right:599px;top:350px;">6</div>
<div class="t " style="right:599px;top:376px;">4</div>
<div class="t " style="right:599px;top:403px;">2</div>
<div class="t " style="left:470px;top:296px;">20</div>
<div class="t " style="left:470px;top:323px;">16</div>
<div class="t " style="left:470px;top:350px;">12</div>
<div class="t " style="left:470px;top:376px;">8</div>
<div class="t " style="left:470px;top:403px;">4</div>
<div class="t " style="left:19px;width:60px;text-align:center;top:440px;">0.0</div>
<div class="t " style="left:66px;width:60px;text-align:center;top:440px;">0.5</div>
<div class="t " style="left:112px;width:60px;text-align:center;top:440px;">1.0</div>
<div class="t " style="left:159px;width:60px;text-align:center;top:440px;">1.5</div>
<div class="t " style="left:205px;width:60px;text-align:center;top:440px;">2.0</div>
<div class="t " style="left:252px;width:60px;text-align:center;top:440px;">2.5</div>
<div class="t " style="left:298px;width:60px;text-align:center;top:440px;">3.0</div>
<div class="t " style="left:345px;width:60px;text-align:center;top:440px;">3.5</div>
<div class="t " style="left:391px;width:60px;text-align:center;top:440px;">4.0</div>
<div class="t " style="left:438px;width:60px;text-align:center;top:440px;">4.5</div>

<!-- right column -->
<div class="abs gb" style="left:491px;top:134px;width:140px;height:84px"></div>
<div class="t" style="left:498px;top:129px;padding:0 2px;background:#FBFBFA;color:#0046D5">Disk-Info</div>
<div class="t" style="left:500px;top:144px">Typ:</div><div class="t nv" style="left:546px;top:144px">DVD+R</div>
<div class="t" style="left:500px;top:161px">ID:</div><div class="t nv" style="left:546px;top:161px">INFOME R20</div>
<div class="t" style="left:500px;top:178px">Datum:</div><div class="t nv" style="left:546px;top:178px">12 May 2006</div>
<div class="t" style="left:500px;top:195px">Label:</div><div class="t nv" style="left:546px;top:195px">-</div>

<div class="abs gb" style="left:491px;top:225px;width:140px;height:205px"></div>
<div class="t" style="left:498px;top:221px;padding:0 2px;background:#F9F9F7;color:#0046D5">Einstellungen</div>
<div class="t" style="left:500px;top:234px">Geschwindigkeit:</div>
<div class="abs combo" style="left:500px;top:250px;width:84px;height:21px"></div>
<div class="t" style="left:505px;top:255px">8 X</div>
<div class="abs ddb" style="left:567px;top:252px;width:15px;height:17px"></div>
<svg class="abs" style="left:567px;top:252px" width="15" height="17"><path d="M3.2 6.6 L7.5 10.8 L11.8 6.6" fill="none" stroke="#4D6185" stroke-width="2.3"/></svg>
<div class="abs" style="left:592px;top:248px;width:23px;height:23px;background:#ECE9D8;border:1px solid;border-color:#fff #716F64 #716F64 #fff;box-shadow:inset -1px -1px 0 #ACA899"></div>
<div class="abs" style="left:596px;top:251px;width:14px;height:16px;background:#fff;border:1px solid #000;box-shadow:inset 1px 1px 0 rgba(0,0,0,.45),inset -1px -1px 0 rgba(0,0,0,.45)"></div>
<svg class="abs" style="left:598px;top:253px" width="11" height="13" viewBox="0 0 11 13">
 <path d="M2 5.5 V3.2 Q2 2.5 2.7 2.5 H6" fill="none" stroke="#009A00" stroke-width="1.4"/><path d="M6 0.6 L8.8 2.5 L6 4.4Z" fill="#009A00"/>
 <path d="M8.5 7 V9.3 Q8.5 10 7.8 10 H4.5" fill="none" stroke="#009A00" stroke-width="1.4"/><path d="M4.5 8.1 L1.7 10 L4.5 11.9Z" fill="#009A00"/>
</svg>
<div class="t" style="left:503px;top:282px">Start:</div>
<div class="abs combo" style="left:554px;top:276px;width:61px;height:20px"></div>
<div class="t" style="left:557px;top:280px">0000 MB</div>
<div class="t" style="left:503px;top:304px">Ende:</div>
<div class="abs combo" style="left:554px;top:299px;width:61px;height:20px"></div>
<div class="t" style="left:557px;top:303px">4342 MB</div>

<div class="abs chk" style="left:502px;top:324px"></div>
<div class="t" style="left:518px;top:325px">Schnelles Scannen</div>
<div class="abs chk" style="left:502px;top:345px"></div>
<div class="t" style="left:518px;top:346px">C1/PIE anzeigen</div>
<div class="abs chk" style="left:502px;top:361px"></div>
<div class="t" style="left:518px;top:362px">C2/PIF anzeigen</div>
<div class="abs chk" style="left:502px;top:378px"></div>
<div class="t" style="left:518px;top:379px">Jitter anzeigen</div>
<div class="abs chk" style="left:502px;top:394px"></div>
<div class="t" style="left:518px;top:395px;width:108px;overflow:hidden">Lesegeschwindigkeit anzeigen</div>
<div class="abs chk dis" style="left:502px;top:410px"></div>
<div class="t" style="left:518px;top:411px;width:110px;overflow:hidden;color:#ACA899">Schreibgeschwindigkeit anzeigen</div>
<svg class="abs" style="left:502px;top:345px" width="13" height="80" viewBox="0 0 13 80">
 <g fill="none" stroke="#21A121" stroke-width="2"><path d="M3 5.5 L5.5 8 L10 3.5"/><path d="M3 21.5 L5.5 24 L10 19.5"/><path d="M3 38.5 L5.5 41 L10 36.5"/><path d="M3 54.5 L5.5 57 L10 52.5"/></g>
 <path d="M3 70.5 L5.5 73 L10 68.5" fill="none" stroke="#CAC8BB" stroke-width="2"/>
</svg>

<div class="abs gb" style="left:491px;top:435px;width:140px;height:27px"></div>
<div class="t" style="left:502px;top:443px">Qualitätsindex:</div>
<div class="t nv" style="right:20px;top:443px">97</div>

<div class="abs gb" style="left:491px;top:467px;width:140px;height:57px"></div>
<div class="t" style="left:502px;top:477px">Fortschritt:</div><div class="t nv" style="right:20px;top:477px">100 %</div>
<div class="t" style="left:502px;top:493px">Position:</div><div class="t nv" style="right:20px;top:493px">4341 MB</div>
<div class="t" style="left:502px;top:508px">Geschwindigkeit:</div><div class="t nv" style="right:20px;top:508px">8.19 X</div>

<!-- bottom group boxes -->
<div class="abs eb" style="left:14px;top:467px;width:146px;height:57px"></div>
<div class="abs" style="left:22px;top:462px;width:56px;height:12px;background:#F4F3EF"></div>
<div class="abs sq" style="left:24px;top:464px;background:#00FFFF"></div>
<div class="t" style="left:36px;top:462px">PI Errors</div>
<div class="t" style="left:22px;top:478px">Durchschnitt</div><div class="t nv" style="right:490px;top:478px">5.76</div>
<div class="t" style="left:22px;top:493px">Maximum:</div><div class="t nv" style="right:490px;top:493px">16</div>
<div class="t" style="left:22px;top:508px">Gesamt:</div><div class="t nv" style="right:490px;top:508px">63299</div>

<div class="abs eb" style="left:172px;top:467px;width:146px;height:57px"></div>
<div class="abs" style="left:180px;top:462px;width:64px;height:12px;background:#F4F3EF"></div>
<div class="abs sq" style="left:182px;top:464px;background:#FFFF00"></div>
<div class="t" style="left:193px;top:462px">PI Failures</div>
<div class="t" style="left:182px;top:478px">Durchschnitt</div><div class="t nv" style="right:332px;top:478px">0.11</div>
<div class="t" style="left:182px;top:493px">Maximum:</div><div class="t nv" style="right:332px;top:493px">6</div>
<div class="t" style="left:182px;top:508px">Gesamt:</div><div class="t nv" style="right:332px;top:508px">1093</div>

<div class="abs eb" style="left:331px;top:467px;width:148px;height:43px"></div>
<div class="abs" style="left:339px;top:462px;width:38px;height:12px;background:#F4F3EF"></div>
<div class="abs sq" style="left:341px;top:464px;background:#FF00FF"></div>
<div class="t" style="left:352px;top:462px">Jitter</div>
<div class="t" style="left:340px;top:478px">Durchschnitt</div><div class="t nv" style="right:173px;top:478px">8.43 %</div>
<div class="t" style="left:340px;top:493px">Maximum:</div><div class="t nv" style="right:173px;top:493px">10.1 %</div>
<div class="t" style="left:340px;top:512px">PO Ausfälle:</div><div class="t nv" style="right:173px;top:512px">0</div>

</body></html>
